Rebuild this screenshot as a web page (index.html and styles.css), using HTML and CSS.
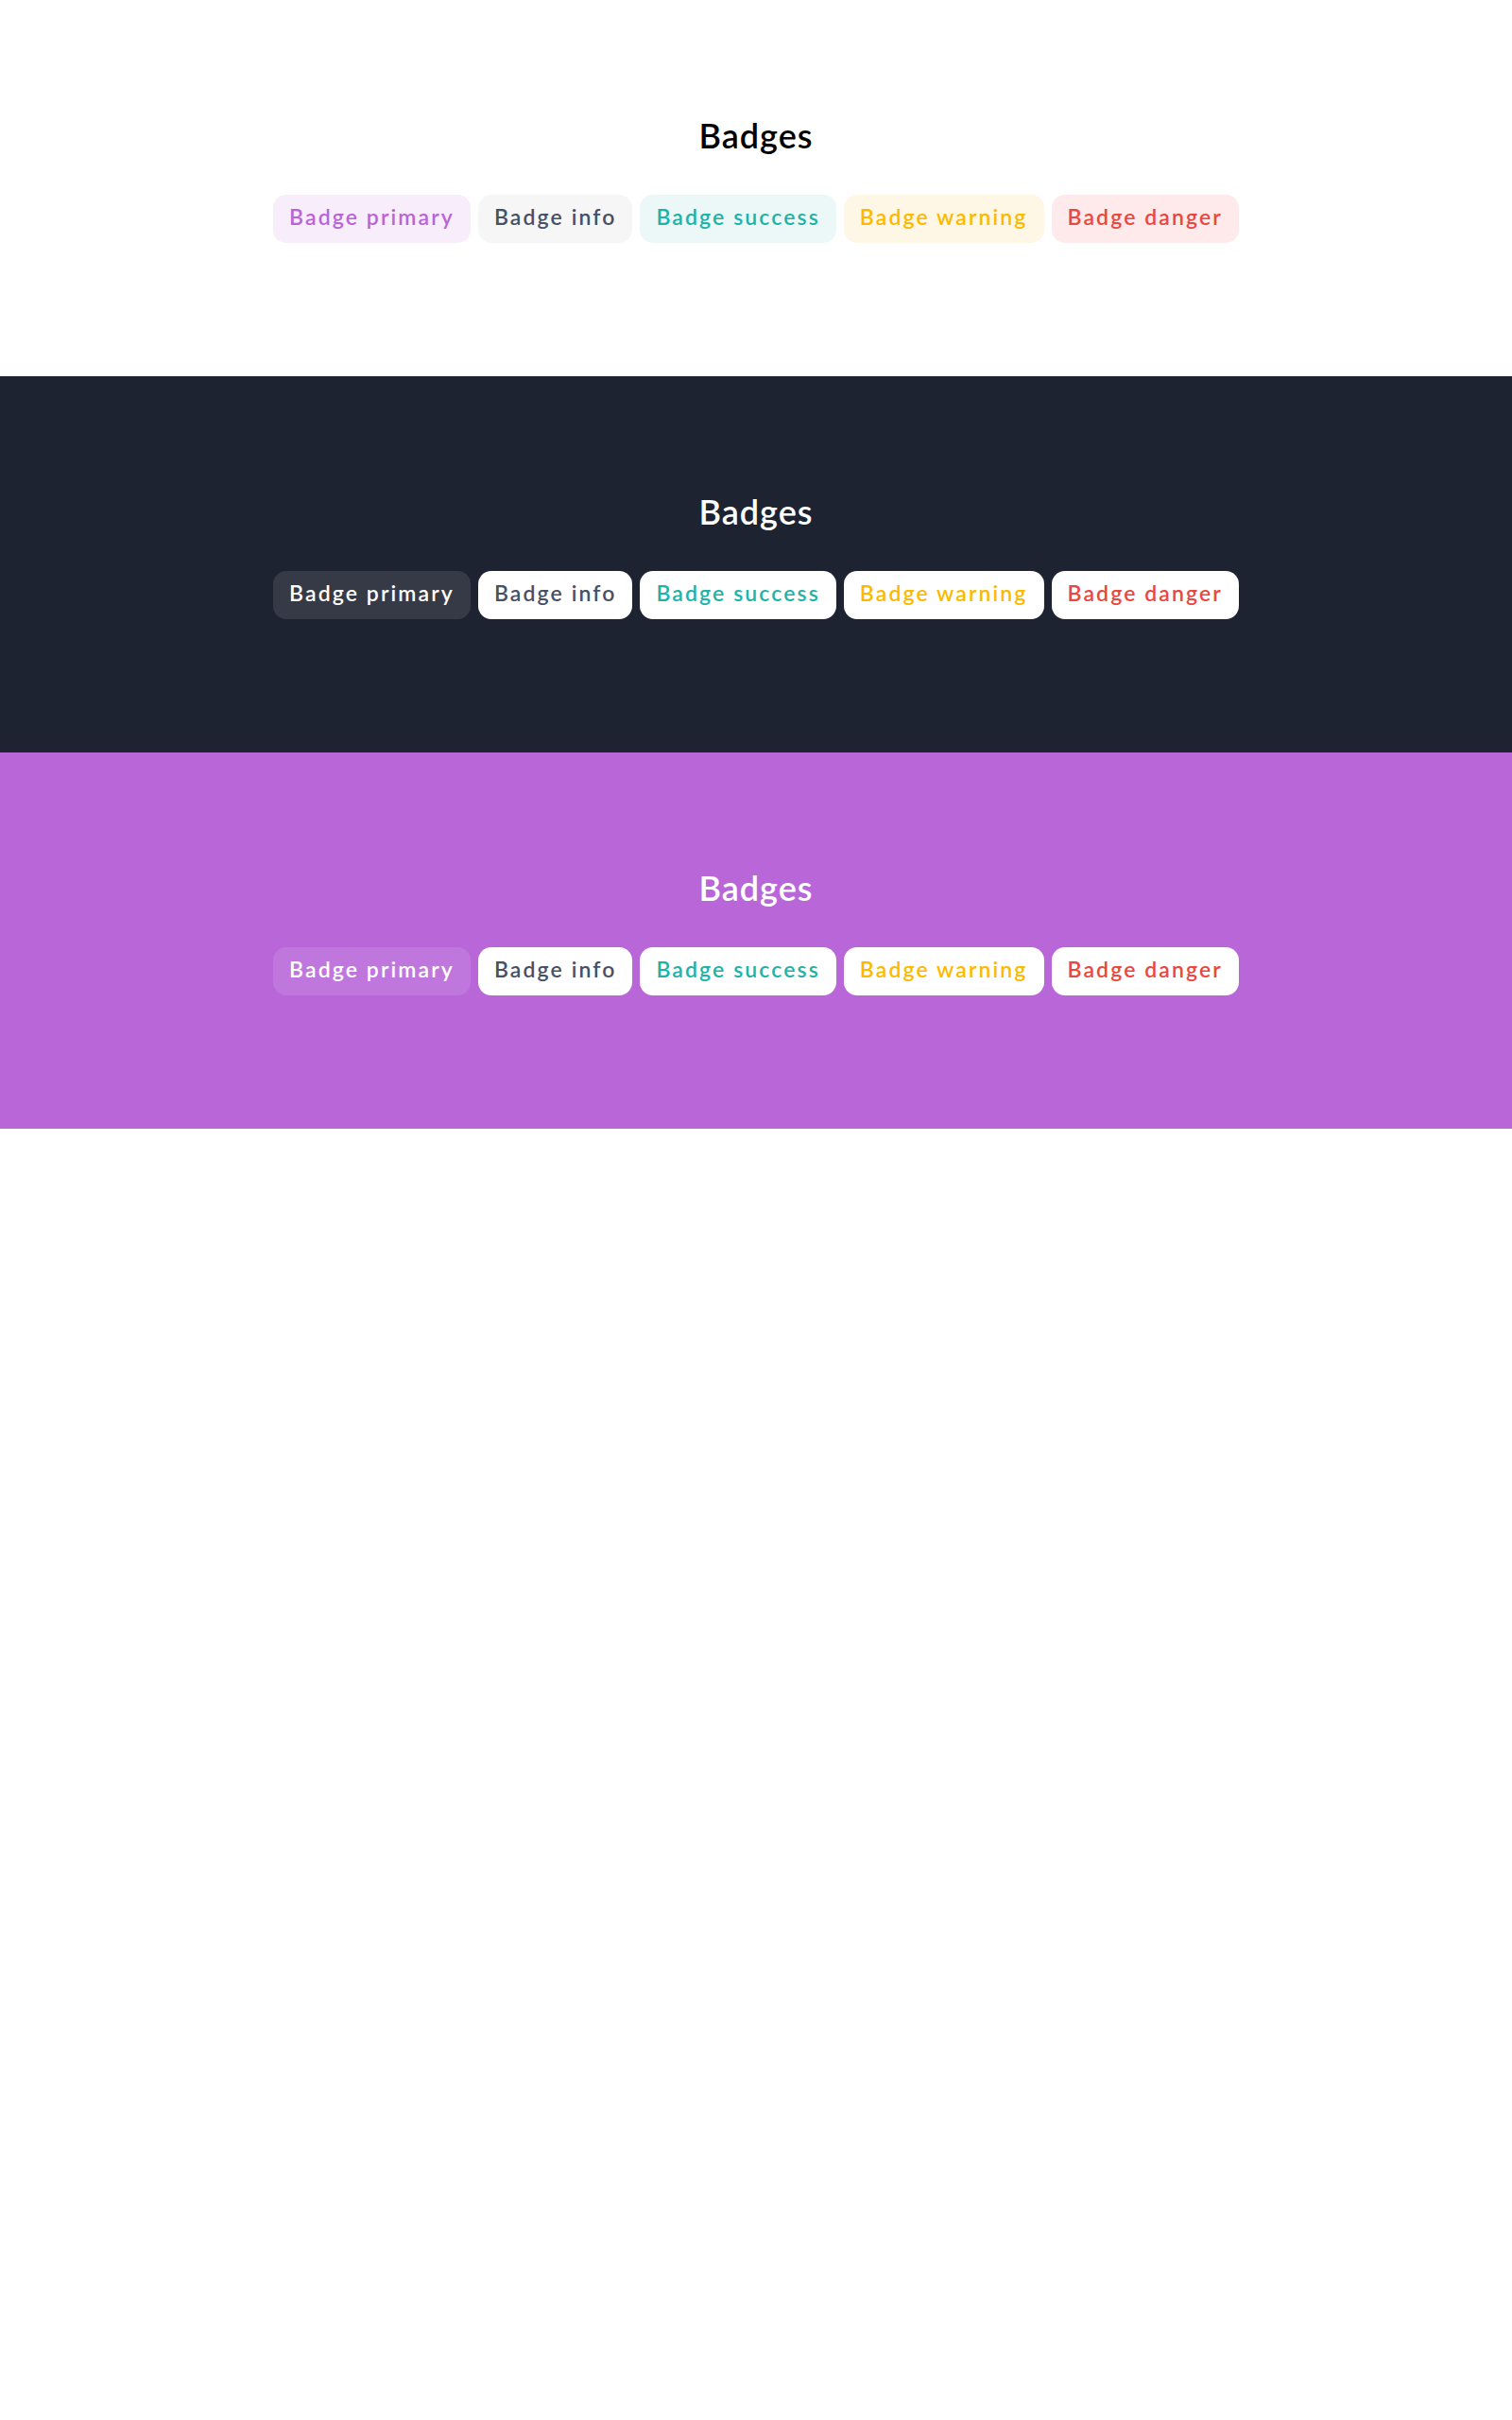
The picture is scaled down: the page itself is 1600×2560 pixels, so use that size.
FILE: index.html
```html
<!DOCTYPE html>
<html lang="en">
<head>
<meta charset="utf-8">
<title>Badges</title>
<link rel="stylesheet" href="styles.css">
</head>
<body>
  <section class="band band-light">
    <div class="container">
      <h2 class="title">Badges</h2>
      <div class="badges">
        <span class="badge badge-primary">Badge primary</span>
        <span class="badge badge-info">Badge info</span>
        <span class="badge badge-success">Badge success</span>
        <span class="badge badge-warning">Badge warning</span>
        <span class="badge badge-danger">Badge danger</span>
      </div>
    </div>
  </section>
  <section class="band band-dark">
    <div class="container">
      <h2 class="title">Badges</h2>
      <div class="badges">
        <span class="badge badge-primary">Badge primary</span>
        <span class="badge badge-info">Badge info</span>
        <span class="badge badge-success">Badge success</span>
        <span class="badge badge-warning">Badge warning</span>
        <span class="badge badge-danger">Badge danger</span>
      </div>
    </div>
  </section>
  <section class="band band-purple">
    <div class="container">
      <h2 class="title">Badges</h2>
      <div class="badges">
        <span class="badge badge-primary">Badge primary</span>
        <span class="badge badge-info">Badge info</span>
        <span class="badge badge-success">Badge success</span>
        <span class="badge badge-warning">Badge warning</span>
        <span class="badge badge-danger">Badge danger</span>
      </div>
    </div>
  </section>
</body>
</html>
```

FILE: styles.css
```css
* { box-sizing: border-box; }
html, body { margin: 0; padding: 0; background: #ffffff; }
body { font-family: Lato, "Noto Sans", "DejaVu Sans", sans-serif; }

.band {
  height: 398px;
  padding-top: 122px;
}
.band-light { background: #ffffff; color: #000000; }
.band-dark { background: #1e2332; color: #ffffff; }
.band-purple { background: #b967d8; color: #ffffff; }

.container {
  width: 1024px;
  margin: 0 auto;
}

.title {
  margin: 0;
  text-align: center;
  font-size: 36px;
  line-height: 1.2;
  font-weight: 600;
  letter-spacing: 1px;
}

.badges {
  display: flex;
  justify-content: center;
  gap: 8px;
  margin-top: 41px;
}

.badge {
  display: inline-block;
  font-size: 23px;
  line-height: 1.2;
  font-weight: 600;
  letter-spacing: 2.1px;
  padding: 10px 17px 13px;
  border-radius: 14px;
  white-space: nowrap;
}

.band-light .badge-primary { background: #f7edfb; color: #b965d8; }
.band-light .badge-info { background: #f6f6f7; color: #475166; }
.band-light .badge-success { background: #ebf8f7; color: #1db3a8; }
.band-light .badge-warning { background: #fff7e6; color: #fdb900; }
.band-light .badge-danger { background: #feeaea; color: #e8483f; }

.band-dark .badge,
.band-purple .badge { background: #ffffff; }
.band-dark .badge-primary { background: #363a47; color: #ffffff; }
.band-purple .badge-primary { background: #c077dd; color: #ffffff; }
.band-dark .badge-info, .band-purple .badge-info { color: #475166; }
.band-dark .badge-success, .band-purple .badge-success { color: #1db3a8; }
.band-dark .badge-warning, .band-purple .badge-warning { color: #fdb900; }
.band-dark .badge-danger, .band-purple .badge-danger { color: #e8483f; }
```
